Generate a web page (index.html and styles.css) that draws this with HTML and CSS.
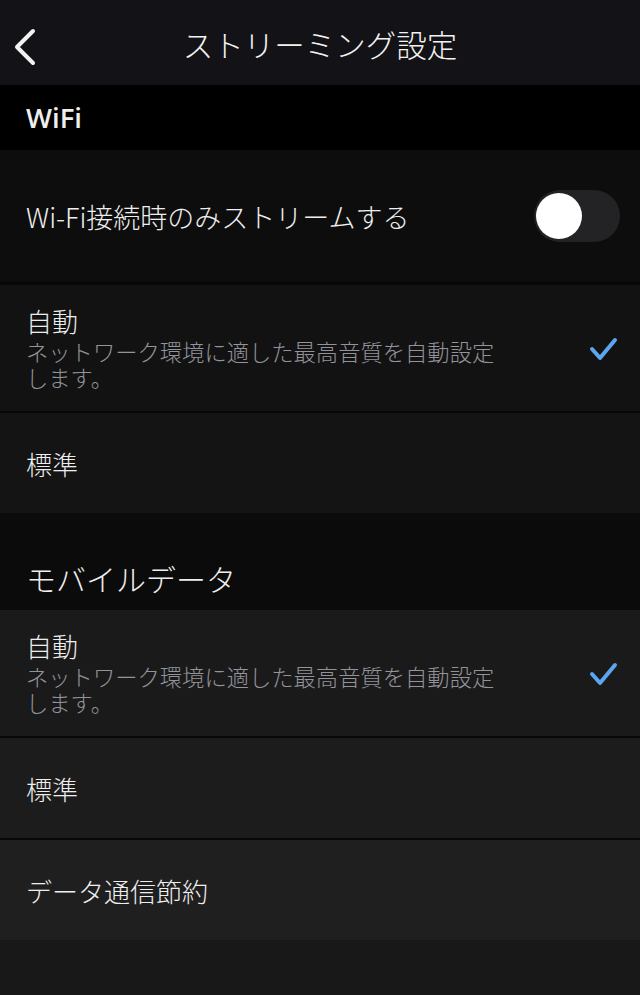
FILE: index.html
```html
<!DOCTYPE html>
<html lang="ja">
<head>
<meta charset="utf-8">
<title>ストリーミング設定</title>
<link rel="stylesheet" href="styles.css">
</head>
<body>

    <div class="topbar">
        <svg class="back" width="26" height="38" viewBox="0 0 26 38">
            <path d="M21 3 L5 19 L21 35" fill="none" stroke="#f2f2f2" stroke-width="4" stroke-linecap="round" stroke-linejoin="round"/>
        </svg>
        <div class="title">ストリーミング設定</div>
    </div>

    <div class="section wifi-head">WiFi</div>

    <div class="row toggle-row">
        <div class="label">Wi-Fi接続時のみストリームする</div>
        <div class="toggle"><div class="knob"></div></div>
    </div>

    <div class="row tall r2">
        <div class="text">
            <div class="label">自動</div>
            <div class="sub">ネットワーク環境に適した最高音質を自動設定<br>します。</div>
        </div>
        <svg class="check" width="32" height="28" viewBox="0 0 32 28">
            <path d="M4 14 L12 23 L27 5" fill="none" stroke="#5ba6ee" stroke-width="4" stroke-linecap="round" stroke-linejoin="round"/>
        </svg>
    </div>

    <div class="row r3">
        <div class="label">標準</div>
    </div>

    <div class="section mobile-head">モバイルデータ</div>

    <div class="row tall r4">
        <div class="text">
            <div class="label">自動</div>
            <div class="sub">ネットワーク環境に適した最高音質を自動設定<br>します。</div>
        </div>
        <svg class="check" width="32" height="28" viewBox="0 0 32 28">
            <path d="M4 14 L12 23 L27 5" fill="none" stroke="#5ba6ee" stroke-width="4" stroke-linecap="round" stroke-linejoin="round"/>
        </svg>
    </div>

    <div class="row r5">
        <div class="label">標準</div>
    </div>

    <div class="row r6">
        <div class="label">データ通信節約</div>
    </div>

</body>
</html>
```

FILE: styles.css
```css
body {
    margin: 0;
    background-color: #181818;
    font-family: "Noto Sans CJK JP", "Noto Sans", sans-serif;
    color: #eeeeee;
}

.topbar {
    height: 85px;
    background-color: #131217;
    display: flex;
    align-items: center;
    justify-content: center;
    position: relative;
}

.back {
    position: absolute;
    left: 12px;
    top: 28px;
}

.title {
    font-size: 30.5px;
    font-weight: 300;
    color: #f2f2f2;
    padding-top: 2px;
}

.section {
    display: flex;
    align-items: center;
    padding-left: 26px;
}

.wifi-head {
    height: 65px;
    background-color: #000000;
    font-family: "Open Sans", "Noto Sans", sans-serif;
    font-weight: 600;
    font-size: 27.5px;
}

.mobile-head {
    height: 97px;
    background-color: #0b0b0b;
    font-size: 30px;
    font-weight: 300;
    padding-top: 32px;
    box-sizing: border-box;
}

.row {
    display: flex;
    align-items: center;
    justify-content: space-between;
    padding: 0 20px 0 26px;
    height: 100px;
    border-bottom: 2px solid #070707;
}

.label {
    font-size: 26px;
    font-weight: 300;
    color: #eeeeee;
}

.toggle-row .label {
    font-size: 27px;
}

.sub {
    font-size: 22.3px;
    font-weight: 300;
    color: #93939b;
    line-height: 26px;
    margin-top: 2px;
}

.toggle-row {
    height: 132px;
    background-color: #0d0d0d;
    border-bottom-width: 3px;
}

.toggle {
    width: 86px;
    height: 52px;
    border-radius: 26px;
    background-color: #232325;
    display: flex;
    align-items: center;
    padding-left: 2px;
    box-sizing: border-box;
}

.knob {
    width: 46px;
    height: 46px;
    border-radius: 50%;
    background-color: #ffffff;
}

.tall {
    height: 126px;
}

.text .label {
    line-height: 30px;
}

.check {
    margin-top: 2px;
}

.r2 { background-color: #121212; }
.r3 { background-color: #141414; border-bottom: none; }
.r4 { background-color: #1a1a1a; }
.r5 { background-color: #1c1c1c; }
.r6 { background-color: #1f1f1f; border-bottom: none; }
```
